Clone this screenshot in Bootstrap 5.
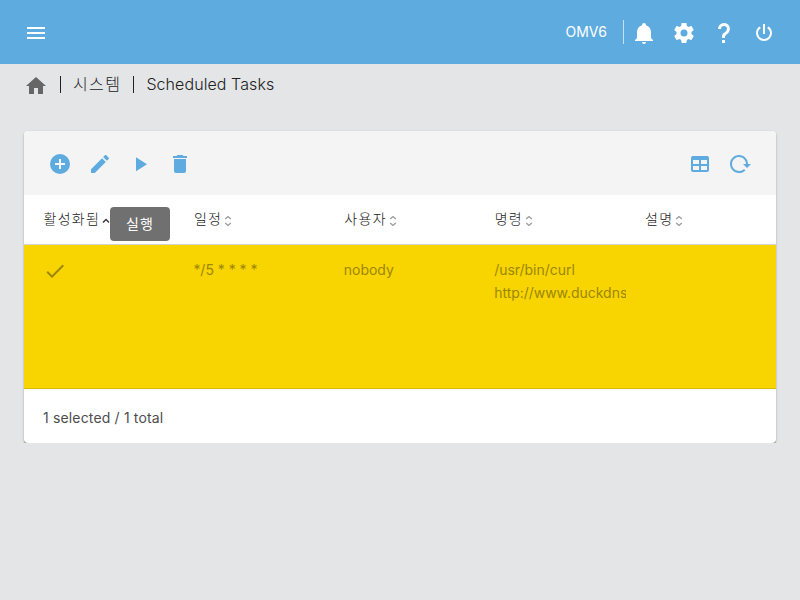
<!DOCTYPE html>
<html lang="ko">
<head>
<meta charset="utf-8">
<meta name="viewport" content="width=device-width, initial-scale=1">
<title>Scheduled Tasks</title>
<link href="https://cdn.jsdelivr.net/npm/bootstrap@5.3.0/dist/css/bootstrap.min.css" rel="stylesheet">
<style>
body{font-family:Inter,"Noto Sans CJK KR",sans-serif;font-size:14px;line-height:23px;background:#e4e5e7;color:#212121;overflow:hidden}
svg{display:block;flex:none;fill:currentColor}
.topbar{height:64px;background:#5dabdf;padding:2px 24px 0}
.host{font-weight:400;line-height:20px;padding-right:16px;margin-top:-2px}
.rule{width:1px;height:24px;background:#c6e1f4;margin-top:-2px;margin-right:8px}
.crumbs{height:67px;padding:10px 24px 0;font-size:16px;line-height:20px;font-weight:300;letter-spacing:.08px}
.crumbs .sep{width:1px;height:17px;background:#212121;margin:2px 12px 0}
.crumbs .ko{letter-spacing:1.4px}
.home{color:#666}
.panel{margin:0 24px;border-radius:4px;background:#fff;box-shadow:0 1px 1px rgba(0,0,0,.42),0 1px 3px rgba(0,0,0,.15)}
.tools{height:64px;padding:2px 24px 0;background:#f4f4f4;color:#5dabdf;border-radius:4px 4px 0 0}
.grid-head,.grid-row{display:grid;grid-template-columns:150.4px 150.4px 150.4px 150.4px 1fr}
.grid-head{height:50px;border-bottom:1px solid #d2d5d8}
.grid-head>div,.grid-row>div{padding-left:19.5px;overflow:hidden}
.grid-head>div{display:flex;padding-top:12px;padding-right:0;white-space:nowrap;font-weight:300;letter-spacing:1.3px}
.grid-row{height:144px;background:#f8d500;border-bottom:1px solid #d9bb0a;color:#9c8606;letter-spacing:-.03px}
.grid-row>div{padding-top:13px;padding-left:19px}
.grid-row svg{margin-top:1px}
.sorter{margin:8px 0 0 2px;fill:none;stroke:#999;stroke-width:1.3}
.sorter.on{stroke:#333}
.foot{height:54px;padding:17px 19px;color:#4d4d4d;letter-spacing:.16px}
.tip{position:absolute;left:110px;top:207px;width:60px;height:34px;line-height:34px;border-radius:4px;background:#707070;color:#fff;text-align:center;letter-spacing:1.2px}
</style>
</head>
<body>
<header class="topbar d-flex align-items-center text-white">
  <svg width="24" height="24" viewBox="0 0 24 24"><path d="M3,6H21V8H3V6M3,11H21V13H3V11M3,16H21V18H3V16Z"/></svg>
  <div class="host ms-auto">OMV6</div>
  <div class="rule"></div>
  <div class="d-flex gap-3">
    <svg width="24" height="24" viewBox="0 0 24 24"><path d="M21,19V20H3V19L5,17V11C5,7.9 7.03,5.17 10,4.29C10,4.19 10,4.1 10,4A2,2 0 0,1 12,2A2,2 0 0,1 14,4C14,4.1 14,4.19 14,4.29C16.97,5.17 19,7.9 19,11V17L21,19M14,21A2,2 0 0,1 12,23A2,2 0 0,1 10,21"/></svg>
    <svg width="24" height="24" viewBox="0 0 24 24"><path d="M12,15.5A3.5,3.5 0 0,1 8.5,12A3.5,3.5 0 0,1 12,8.5A3.5,3.5 0 0,1 15.5,12A3.5,3.5 0 0,1 12,15.5M19.43,12.97C19.47,12.65 19.5,12.33 19.5,12C19.5,11.67 19.47,11.34 19.43,11L21.54,9.37C21.73,9.22 21.78,8.95 21.66,8.73L19.66,5.27C19.54,5.05 19.27,4.96 19.05,5.05L16.56,6.05C16.04,5.66 15.5,5.32 14.87,5.07L14.5,2.42C14.46,2.18 14.25,2 14,2H10C9.75,2 9.54,2.18 9.5,2.42L9.13,5.07C8.5,5.32 7.96,5.66 7.44,6.05L4.95,5.05C4.73,4.96 4.46,5.05 4.34,5.27L2.34,8.73C2.21,8.95 2.27,9.22 2.46,9.37L4.57,11C4.53,11.34 4.5,11.67 4.5,12C4.5,12.33 4.53,12.65 4.57,12.97L2.46,14.63C2.27,14.78 2.21,15.05 2.34,15.27L4.34,18.73C4.46,18.95 4.73,19.03 4.95,18.95L7.44,17.94C7.96,18.34 8.5,18.68 9.13,18.93L9.5,21.58C9.54,21.82 9.75,22 10,22H14C14.25,22 14.46,21.82 14.5,21.58L14.87,18.93C15.5,18.67 16.04,18.34 16.56,17.94L19.05,18.95C19.27,19.03 19.54,18.95 19.66,18.73L21.66,15.27C21.78,15.05 21.73,14.78 21.54,14.63L19.43,12.97Z"/></svg>
    <svg width="24" height="24" viewBox="0 0 24 24"><path d="M10,19H13V22H10V19M12,2C17.35,2.22 19.68,7.62 16.5,11.67C15.67,12.67 14.33,13.33 13.67,14.17C13,15 13,16 13,17H10C10,15.33 10,13.92 10.67,12.92C11.33,11.92 12.67,11.33 13.5,10.67C15.92,8.43 15.32,5.26 12,5A3,3 0 0,0 9,8H6A6,6 0 0,1 12,2Z"/></svg>
    <svg width="24" height="24" viewBox="0 0 24 24"><path d="M16.56,5.44L15.11,6.89C16.84,7.94 18,9.83 18,12A6,6 0 0,1 12,18A6,6 0 0,1 6,12C6,9.83 7.16,7.94 8.88,6.88L7.44,5.44C5.36,6.88 4,9.28 4,12A8,8 0 0,0 12,20A8,8 0 0,0 20,12C20,9.28 18.64,6.88 16.56,5.44M13,3H11V13H13"/></svg>
  </div>
</header>
<nav class="crumbs d-flex align-items-start">
  <svg class="home" width="24" height="24" viewBox="0 0 24 24"><path d="M10,20V14H14V20H19V12H22L12,3L2,12H5V20H10Z"/></svg>
  <span class="sep"></span><span class="ko">시스템</span><span class="sep"></span><span>Scheduled Tasks</span>
</nav>
<main class="panel">
  <div class="tools d-flex align-items-center gap-3">
    <svg width="24" height="24" viewBox="0 0 24 24"><path d="M17,13H13V17H11V13H7V11H11V7H13V11H17M12,2A10,10 0 0,0 2,12A10,10 0 0,0 12,22A10,10 0 0,0 22,12A10,10 0 0,0 12,2Z"/></svg>
    <svg width="24" height="24" viewBox="0 0 24 24"><path d="M20.71,7.04C21.1,6.65 21.1,6 20.71,5.63L18.37,3.29C18,2.9 17.35,2.9 16.96,3.29L15.12,5.12L18.87,8.87M3,17.25V21H6.75L17.81,9.93L14.06,6.18L3,17.25Z"/></svg>
    <svg width="24" height="24" viewBox="0 0 24 24"><path d="M8,5.14V19.14L19,12.14L8,5.14Z"/></svg>
    <svg width="24" height="24" viewBox="0 0 24 24"><path d="M19,4H15.5L14.5,3H9.5L8.5,4H5V6H19M6,19A2,2 0 0,0 8,21H16A2,2 0 0,0 18,19V7H6V19Z"/></svg>
    <svg class="ms-auto" width="24" height="24" viewBox="0 0 24 24"><path d="M5,4H19A2,2 0 0,1 21,6V18A2,2 0 0,1 19,20H5A2,2 0 0,1 3,18V6A2,2 0 0,1 5,4M5,8V12H11V8H5M13,8V12H19V8H13M5,14V18H11V14H5M13,14V18H19V14H13Z"/></svg>
    <svg width="24" height="24" viewBox="0 0 24 24"><path d="M2 12C2 16.97 6.03 21 11 21C13.39 21 15.68 20.06 17.4 18.4L15.9 16.9C14.63 18.25 12.86 19 11 19C4.76 19 1.64 11.46 6.05 7.05C10.46 2.64 18 5.77 18 12H15L19 16H19.1L23 12H20C20 7.03 15.97 3 11 3C6.03 3 2 7.03 2 12Z"/></svg>
  </div>
  <div class="grid-head">
    <div>활성화됨<svg class="sorter on" width="8" height="12" viewBox="0 0 8 12"><path d="M1,7.5L4,4.5L7,7.5"/></svg></div>
    <div>일정<svg class="sorter" width="8" height="12" viewBox="0 0 8 12"><path d="M1.2,4L4,1.6L6.8,4M1.2,8L4,10.4L6.8,8"/></svg></div>
    <div>사용자<svg class="sorter" width="8" height="12" viewBox="0 0 8 12"><path d="M1.2,4L4,1.6L6.8,4M1.2,8L4,10.4L6.8,8"/></svg></div>
    <div>명령<svg class="sorter" width="8" height="12" viewBox="0 0 8 12"><path d="M1.2,4L4,1.6L6.8,4M1.2,8L4,10.4L6.8,8"/></svg></div>
    <div>설명<svg class="sorter" width="8" height="12" viewBox="0 0 8 12"><path d="M1.2,4L4,1.6L6.8,4M1.2,8L4,10.4L6.8,8"/></svg></div>
  </div>
  <div class="grid-row">
    <div><svg width="24" height="24" viewBox="0 0 24 24"><path d="M21,7L9,19L3.5,13.5L4.91,12.09L9,16.17L19.59,5.59L21,7Z"/></svg></div>
    <div>*/5 * * * *</div>
    <div>nobody</div>
    <div>/usr/bin/curl<br>http://www.duckdns</div>
    <div></div>
  </div>
  <div class="foot">1 selected / 1 total</div>
</main>
<div class="tip">실행</div>
<script src="https://cdn.jsdelivr.net/npm/bootstrap@5.3.0/dist/js/bootstrap.bundle.min.js"></script>
</body>
</html>
